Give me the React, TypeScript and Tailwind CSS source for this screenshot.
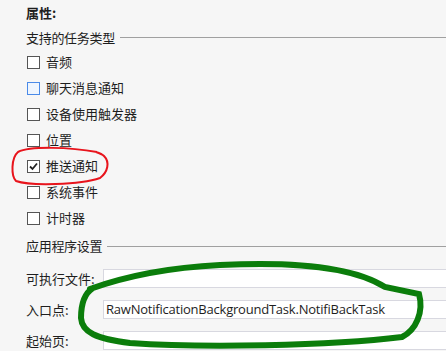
const cjk = { fontFamily: '"Microsoft YaHei", "Noto Sans CJK SC", sans-serif' };

type Item = { label: string; checked?: boolean; hover?: boolean };

const tasks: Item[] = [
  { label: "音频" },
  { label: "聊天消息通知", hover: true },
  { label: "设备使用触发器" },
  { label: "位置" },
  { label: "推送通知", checked: true },
  { label: "系统事件" },
  { label: "计时器" },
];

function CheckRow({ item }: { item: Item }) {
  return (
    <div className="flex h-[26px] items-center gap-[6px] pl-[1px]">
      <span
        className={
          item.hover
            ? "flex h-[13px] w-[13px] items-center justify-center border border-[#4a8ae8] bg-[#eef5fe]"
            : "flex h-[13px] w-[13px] items-center justify-center border border-[#555555] bg-white"
        }
      >
        {item.checked && (
          <svg width="11" height="11" viewBox="0 0 11 11">
            <path d="M2 5.5 L4.5 8 L9 2.5" fill="none" stroke="#222" strokeWidth="1.8" />
          </svg>
        )}
      </span>
      <span className="text-[13px] text-[#1e1e1e]">{item.label}</span>
    </div>
  );
}

function SectionHeader({ title, className }: { title: string; className: string }) {
  return (
    <div className={`flex items-center gap-[5px] ${className}`}>
      <span className="text-[13px] tracking-[-0.3px] text-[#1e1e1e]">{title}</span>
      <div className="h-px flex-1 bg-[#a0a0a0]" />
    </div>
  );
}

function Field({ label, value }: { label: string; value?: string }) {
  return (
    <div className="flex h-[19px] items-center">
      <span className="w-[77px] shrink-0 text-[13px] text-[#1e1e1e]">{label}</span>
      <div
        className="flex h-[19px] w-[360px] shrink-0 items-center border border-[#d8d8e0] bg-white pl-[2px] text-[13px] tracking-[-0.22px] text-[#1e1e1e]"
        style={{ fontFamily: '"Segoe UI", "Open Sans", sans-serif' }}
      >
        {value}
      </div>
    </div>
  );
}

export default function App() {
  return (
    <div className="relative h-[351px] w-[446px] overflow-hidden bg-[#f6f6f6] pl-[26px]" style={cjk}>
      <div className="flex h-[26px] items-center text-[13px] font-bold text-[#1e1e1e]">属性:</div>
      <SectionHeader title="支持的任务类型" className="h-[23px]" />
      <div className="flex flex-col">
        {tasks.map((t) => (
          <CheckRow key={t.label} item={t} />
        ))}
      </div>
      <SectionHeader title="应用程序设置" className="h-[30px]" />
      <div className="mt-[8px] flex flex-col gap-[12px]">
        <Field label="可执行文件:" />
        <Field label="入口点:" value="RawNotificationBackgroundTask.NotifiBackTask" />
        <Field label="起始页:" />
      </div>

      <svg className="pointer-events-none absolute left-0 top-0" width="446" height="351">
        <path
          d="M97 152 C70 147 30 146 18 152 C11 158 11 176 16 181 C30 186 80 185 100 178 C108 172 110 162 104 156 C102 154 99 153 96 152"
          fill="none"
          stroke="#e8141c"
          strokeWidth="2"
        />
        <path
          d="M90 289 C115 280 160 268 220 265 C300 261 355 268 385 287 L419 294 C424 312 416 330 402 337 C330 346 200 348 130 343 C96 339 82 332 81 318 C81 302 85 293 93 288"
          fill="none"
          stroke="#0b7d0b"
          strokeWidth="6"
          strokeLinecap="round"
        />
      </svg>
    </div>
  );
}
